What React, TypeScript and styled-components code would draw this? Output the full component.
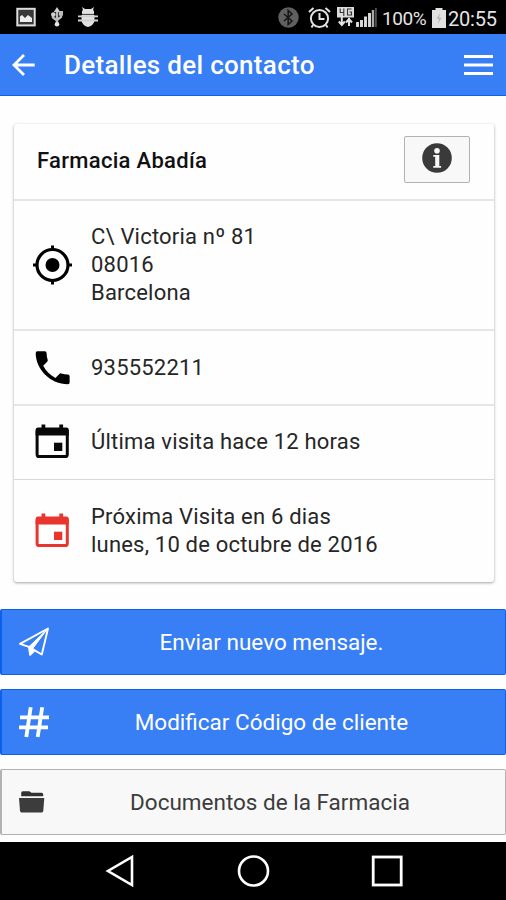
import React from "react";
import styled, { createGlobalStyle } from "styled-components";

const GlobalStyle = createGlobalStyle`
  * { box-sizing: border-box; }
  body { margin: 0; background: #fefefe; font-family: Roboto, sans-serif; }
`;

const Screen = styled.div`
  display: flex;
  flex-direction: column;
  width: 506px;
  height: 900px;
  overflow: hidden;
  background: #fefefe;
`;

const StatusBar = styled.div`
  display: flex;
  justify-content: space-between;
  flex: 0 0 34px;
  padding: 7px 9px 0 16px;
  background: #000;
  color: #e4e4e4;
`;

const StatusGroup = styled.div<{ $gap: number }>`
  display: flex;
  align-items: flex-start;
  gap: ${(p) => p.$gap}px;
`;

const StatusItem = styled.span<{ $width: number }>`
  display: flex;
  flex: 0 0 ${(p) => p.$width}px;
`;

const StatusText = styled.span<{ $size: number; $spacing: number; $width: number }>`
  flex: 0 0 ${(p) => p.$width}px;
  padding-top: 1px;
  font-size: ${(p) => p.$size}px;
  line-height: 22px;
  letter-spacing: ${(p) => p.$spacing}px;
  white-space: nowrap;
`;

const Header = styled.header`
  display: flex;
  align-items: center;
  flex: 0 0 62px;
  padding: 1px 13px 0 12px;
  background: #387ef5;
  border-bottom: 1px solid #0c60ee;
  color: #fff;
`;

const Title = styled.h1`
  flex: 1;
  margin: 0 0 0 28px;
  font-size: 26px;
  font-weight: 500;
  line-height: 34px;
  letter-spacing: 0.3px;
  white-space: nowrap;
`;

const Card = styled.section`
  flex: 0 0 458px;
  margin: 28px 12px 0 14px;
  background: #fefefe;
  border-radius: 3px;
  box-shadow: 0 1px 3px rgba(0, 0, 0, 0.36);
`;

const CardHeader = styled.div`
  display: flex;
  align-items: center;
  justify-content: space-between;
  height: 75px;
  padding: 0 24px 4px 23px;
`;

const CardTitle = styled.h2`
  margin: 0;
  padding-top: 2px;
  font-size: 22px;
  font-weight: 500;
  line-height: 28px;
  letter-spacing: 0.3px;
  color: #111;
`;

const InfoButton = styled.button`
  display: flex;
  align-items: center;
  justify-content: center;
  width: 66px;
  height: 47px;
  padding: 0 0 3px;
  background: #f8f8f8;
  border: 1px solid #b2b2b2;
  border-radius: 2px;
`;

const Row = styled.div<{ $height: number; $line: number; $lift: number }>`
  display: flex;
  align-items: center;
  height: ${(p) => p.$height}px;
  padding: 0 18px ${(p) => p.$lift}px;
  border-top: ${(p) => p.$line}px solid ${(p) => (p.$line > 1 ? "#e6e6e6" : "#d8d8d8")};
`;

const RowText = styled.div`
  margin-left: 18px;
  font-size: 22px;
  line-height: 28px;
  letter-spacing: 0.2px;
  color: #262626;
  white-space: pre-line;
`;

const Actions = styled.div`
  display: flex;
  flex-direction: column;
  flex: 1;
  gap: 14px;
  padding-top: 27px;
`;

const ActionButton = styled.button<{ $light?: boolean }>`
  display: grid;
  grid-template-columns: 37px 1fr;
  align-items: center;
  height: 66px;
  padding: 0 ${(p) => (p.$light ? 4 : 1)}px 0 16px;
  background: ${(p) => (p.$light ? "#f8f8f8" : "#387ef5")};
  border: 1px solid ${(p) => (p.$light ? "#b2b2b2" : "#0c60ee")};
  border-left-width: 2px;
  border-radius: 2px;
  color: ${(p) => (p.$light ? "#3c3c3c" : "#fff")};
  font-family: inherit;
`;

const ActionLabel = styled.span`
  padding-right: 16px;
  font-size: 22.5px;
  line-height: 30px;
  text-align: center;
`;

const NavBar = styled.nav`
  display: flex;
  align-items: center;
  justify-content: space-between;
  flex: 0 0 58px;
  padding: 0 102px 0 105px;
  background: #000;
  color: #fff;
`;

type IconProps = { w: number; h: number; children: React.ReactNode };
const Icon = ({ w, h, children }: IconProps) => (
  <svg width={w} height={h} viewBox={`0 0 ${w} ${h}`} fill="none" aria-hidden="true">
    {children}
  </svg>
);

const PictureIcon = () => (
  <Icon w={20} h={20}>
    <rect x="1.3" y="1.8" width="17.4" height="16.6" fill="#383838" stroke="#dedede" strokeWidth="2" />
    <path d="M4 15V9.5l2-1.5 3 3 3-3 2 1.5 2 1.5v4z" fill="#eee" />
  </Icon>
);

const UsbIcon = () => (
  <Icon w={12} h={20}>
    <path d="M6 3v14M2 8v2.5l4 3M10 6v4l-4 3" stroke="#bcbcbc" strokeWidth="2.4" />
    <path d="M6 0l3.2 5H2.8z" fill="#d0d0d0" />
    <circle cx="2.3" cy="7.5" r="2.3" fill="#d0d0d0" />
    <rect x="7.8" y="4" width="4.2" height="4.6" fill="#bcbcbc" />
    <circle cx="6" cy="17.2" r="2.3" fill="#e4e4e4" />
  </Icon>
);

const DebugIcon = () => (
  <Icon w={20} h={20}>
    <path d="M4 7V4l1-1-1-3 3 2h6l3-2-1 3 1 1v3zM3.5 8h13v6q-1.5 5-6.5 6-5-1-6.5-6z" fill="#e2e2e2" />
    <path d="M0 9.3h20M0 13.5h20" stroke="#d2d2d2" strokeWidth="1.8" />
    <path d="M4 7.4h12" stroke="#555" strokeWidth="1" />
  </Icon>
);

const BluetoothIcon = () => (
  <Icon w={22} h={22}>
    <circle cx="10.5" cy="10.5" r="10.2" fill="#606060" />
    <path d="M6 7l8 7-3.8 3.5V3.5L14 7l-8 7" stroke="#171717" strokeWidth="1.6" />
  </Icon>
);

const AlarmIcon = () => (
  <Icon w={23} h={22}>
    <circle cx="11.5" cy="11.5" r="8.6" stroke="#e2e2e2" strokeWidth="2" />
    <path d="M1 5l4.5-4M22 5l-4.5-4M11.5 6v6h5M5 18l-1.5 2.5M18 18l1.5 2.5" stroke="#e2e2e2" strokeWidth="2" />
  </Icon>
);

const NetworkIcon = () => (
  <Icon w={17} h={20}>
    <path d="M0 0h17v10.5H0z" fill="#ddd" />
    <path d="M3.2 1.5v4h4M6.8 1.5v7.5M14.5 2h-4v6h4V5h-2" stroke="#333" strokeWidth="1.1" />
    <path d="M4.8 10v8M12 11v8M1.8 14.5l3 3.5 3-3.5M9 15.5l3-3.5 3 3.5" stroke="#e2e2e2" strokeWidth="2" />
  </Icon>
);

const SignalIcon = () => (
  <Icon w={21} h={20}>
    <path d="M1.5 15v5M5.5 13v7M9.5 9.5V20M13.5 6v14" stroke="#dcdcdc" strokeWidth="2.9" />
    <path d="M17 3v17" stroke="#aaa" strokeWidth="2.4" />
    <path d="M19.9 1v19" stroke="#515151" strokeWidth="1.8" />
  </Icon>
);

const BatteryIcon = () => (
  <Icon w={14} h={21}>
    <path d="M0 3h3.5V1h7v2H14v18H0z" fill="#e2e2e2" />
    <path d="M8 6l-3.5 5.8H7L6 17l3.5-6.2H7z" fill="#b4b4b4" />
  </Icon>
);

const BackIcon = () => (
  <Icon w={24} h={24}>
    <path d="M22.7 12H2.2M12 2L2 12l10 10" stroke="#fff" strokeWidth="2.8" />
  </Icon>
);

const MenuIcon = () => (
  <Icon w={29} h={24}>
    <path d="M0 3.5h29M0 12h29M0 20.5h29" stroke="#fff" strokeWidth="3" />
  </Icon>
);

const InfoIcon = () => (
  <Icon w={30} h={30}>
    <circle cx="15" cy="15" r="14.8" fill="#3a3a3a" />
    <circle cx="15" cy="7.7" r="2.8" fill="#f8f8f8" />
    <path d="M11.3 12h6v11h1.8v1.7h-7.8V23h1.9v-9.2h-1.9z" fill="#f8f8f8" />
  </Icon>
);

const LocateIcon = () => (
  <Icon w={41} h={40}>
    <circle cx="20.5" cy="20" r="15.5" stroke="#000" strokeWidth="3.2" />
    <circle cx="20.5" cy="20" r="7" fill="#000" />
    <path d="M20.5 .5v5M20.5 34.5v5M1 20h5M35 20h5" stroke="#000" strokeWidth="3" />
  </Icon>
);

const PhoneIcon = () => (
  <Icon w={41} h={40}>
    <path
      transform="translate(0 .2) scale(.975)"
      d="M5.4 3.2h7.7q1.9 0 1.9 1.9c0 2.4.4 4.7 1.1 6.8q.3 1-.5 1.9l-4.1 4.2c2.7 5.4 7.1 9.7 12.5 12.5l4.1-4.1q.8-.8 1.9-.5c2.1.7 4.4 1.1 6.8 1.1q1.8 0 1.8 1.9v6.3q0 1.8-1.8 1.8C18.9 37 3.8 21.9 3.8 5q0-1.8 1.6-1.8z"
      fill="#000"
    />
  </Icon>
);

const CalendarIcon = ({ color }: { color: string }) => (
  <Icon w={41} h={40}>
    <rect x="5.1" y="8" width="30.2" height="26.6" rx="2.2" stroke={color} strokeWidth="3" />
    <path d="M3.6 8q0-2.5 2.5-2.5h3.4v-3h3.8v3h14v-3h3.8v3h3.2q2.5 0 2.5 2.5v5.5H3.6z" fill={color} />
    <rect x="22" y="20.7" width="8.3" height="8.3" fill={color} />
  </Icon>
);

const PlaneIcon = () => (
  <Icon w={32} h={32}>
    <path d="M2 17.8L30 2.5l-6.2 26-7.1-4.1-4.6 4.5-1.1-8z" stroke="#fff" strokeWidth="1.9" strokeLinejoin="round" />
    <path d="M29 3.5L11 20.7l1 8 2.8-6.3z" fill="#fff" stroke="#fff" strokeWidth="1" />
    <path d="M14.3 21.7l3 1.8-4.6 4.4z" fill="#fff" />
  </Icon>
);

const HashIcon = () => (
  <Icon w={32} h={32}>
    <path d="M12.7 1.3L8.3 31M24.2 1.3l-4.5 29.7M2 11.4h29M1 21.4h29" stroke="#fff" strokeWidth="3.8" />
  </Icon>
);

const FolderIcon = () => (
  <Icon w={32} h={32}>
    <path d="M3.2 10.3V6.8q0-1.6 1.6-1.6h6.5l2.2 1.6h10.2q1.5 0 1.5 1.5v2z" fill="#333" />
    <path d="M1 12h25.3l-1 12.8q-.1 1.6-1.5 1.6H3.5Q2.1 26.4 2 24.8z" fill="#3c3c3c" />
  </Icon>
);

const NavBackIcon = () => (
  <Icon w={30} h={34}>
    <path d="M27 3v28L3 17z" stroke="#fff" strokeWidth="2.6" />
  </Icon>
);

const NavHomeIcon = () => (
  <Icon w={34} h={34}>
    <circle cx="17.5" cy="17" r="14.5" stroke="#fff" strokeWidth="2.6" />
  </Icon>
);

const NavRecentIcon = () => (
  <Icon w={34} h={34}>
    <rect x="3.2" y="3" width="28" height="28" stroke="#fff" strokeWidth="2.8" />
  </Icon>
);

const details = [
  { height: 130, line: 2, lift: 0, icon: <LocateIcon />, text: "C\\ Victoria nº 81\n08016\nBarcelona" },
  { height: 75, line: 2, lift: 0, icon: <PhoneIcon />, text: "935552211" },
  { height: 75, line: 2, lift: 2, icon: <CalendarIcon color="#080808" />, text: "Última visita hace 12 horas" },
  {
    height: 103,
    line: 1,
    lift: 1,
    icon: <CalendarIcon color="#e8352d" />,
    text: "Próxima Visita en 6 dias\nlunes, 10 de octubre de 2016",
  },
];

export default function App() {
  return (
    <>
      <GlobalStyle />
      <Screen>
        <StatusBar>
          <StatusGroup $gap={15}>
            <PictureIcon />
            <UsbIcon />
            <DebugIcon />
          </StatusGroup>
          <StatusGroup $gap={0}>
            <StatusItem $width={30}><BluetoothIcon /></StatusItem>
            <StatusItem $width={29}><AlarmIcon /></StatusItem>
            <StatusItem $width={19}><NetworkIcon /></StatusItem>
            <StatusItem $width={26}><SignalIcon /></StatusItem>
            <StatusText $size={19} $spacing={-0.4} $width={50}>100%</StatusText>
            <StatusItem $width={16}><BatteryIcon /></StatusItem>
            <StatusText $size={20} $spacing={-0.2} $width={49}>20:55</StatusText>
          </StatusGroup>
        </StatusBar>
        <Header>
          <BackIcon />
          <Title>Detalles del contacto</Title>
          <MenuIcon />
        </Header>
        <Card>
          <CardHeader>
            <CardTitle>Farmacia Abadía</CardTitle>
            <InfoButton aria-label="Información">
              <InfoIcon />
            </InfoButton>
          </CardHeader>
          {details.map((d) => (
            <Row key={d.text} $height={d.height} $line={d.line} $lift={d.lift}>
              {d.icon}
              <RowText>{d.text}</RowText>
            </Row>
          ))}
        </Card>
        <Actions>
          <ActionButton>
            <PlaneIcon />
            <ActionLabel>Enviar nuevo mensaje.</ActionLabel>
          </ActionButton>
          <ActionButton>
            <HashIcon />
            <ActionLabel>Modificar Código de cliente</ActionLabel>
          </ActionButton>
          <ActionButton $light>
            <FolderIcon />
            <ActionLabel>Documentos de la Farmacia</ActionLabel>
          </ActionButton>
        </Actions>
        <NavBar>
          <NavBackIcon />
          <NavHomeIcon />
          <NavRecentIcon />
        </NavBar>
      </Screen>
    </>
  );
}
